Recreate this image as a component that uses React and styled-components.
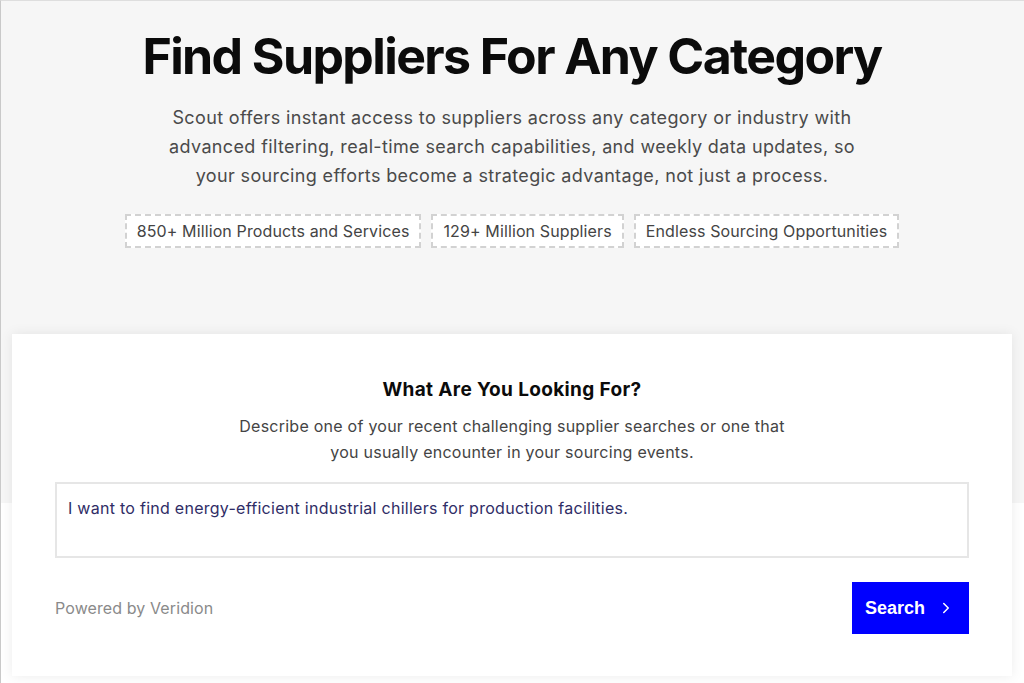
import React, { useState } from 'react'
import styled, { createGlobalStyle } from 'styled-components'
import { ChevronRight } from 'lucide-react'

const GlobalStyle = createGlobalStyle`
  html, body {
    margin: 0;
    padding: 0;
    background: #fff;
  }
  body {
    font-family: Inter, "Noto Sans", sans-serif;
    color: #111;
  }
  * { box-sizing: border-box; }
`

const Page = styled.div`
  min-height: 683px;
  border-left: 1px solid #c9c9c9;
  border-top: 1px solid #dedede;
  background: linear-gradient(#f6f6f6 0, #f6f6f6 502px, #fff 502px);
  padding: 0 12px 8px 11px;
`

const Hero = styled.section`
  display: flex;
  flex-direction: column;
  align-items: center;
  padding-top: 24px;
  padding-bottom: 86px;
`

const Title = styled.h1`
  margin: 0;
  font-size: 50px;
  line-height: 62px;
  font-weight: 700;
  letter-spacing: -1.6px;
  color: #0b0b0b;
`

const Lead = styled.p`
  margin: 16px 0 0;
  text-align: center;
  font-size: 18px;
  line-height: 29px;
  color: #4a4a4a;
  letter-spacing: 0.36px;
  white-space: nowrap;
`

const Tags = styled.div`
  display: flex;
  gap: 10px;
  margin-top: 24px;
`

const Tag = styled.span`
  display: inline-block;
  background: #fff;
  border: 2px dashed #d2d2d2;
  padding: 5px 10px;
  font-size: 16px;
  line-height: 20px;
  color: #444;
  letter-spacing: 0.12px;
`

const Card = styled.div`
  background: #fff;
  box-shadow: 0 0 12px rgba(0, 0, 0, 0.08);
  padding: 43px 43px 42px;
  display: flex;
  flex-direction: column;
  align-items: center;
`

const CardTitle = styled.h2`
  margin: 0;
  font-size: 19px;
  line-height: 26px;
  font-weight: 700;
  letter-spacing: 0.35px;
  color: #0b0b0b;
`

const CardText = styled.p`
  margin: 10px 0 0;
  text-align: center;
  font-size: 16px;
  line-height: 26px;
  color: #444;
  letter-spacing: 0.25px;
  white-space: nowrap;
`

const Field = styled.textarea`
  margin-top: 17px;
  width: 100%;
  height: 76px;
  resize: none;
  border: 2px solid #e6e6e6;
  outline: none;
  padding: 13px 11px;
  font-family: Inter, "Noto Sans", sans-serif;
  font-size: 16px;
  line-height: 22px;
  color: #2f2d66;
  letter-spacing: 0.27px;
`

const Footer = styled.div`
  width: 100%;
  margin-top: 24px;
  display: flex;
  align-items: center;
  justify-content: space-between;
`

const Powered = styled.span`
  font-size: 16px;
  color: #8a8a8a;
  letter-spacing: 0.1px;
`

const SearchButton = styled.button`
  display: flex;
  align-items: center;
  gap: 12px;
  height: 52px;
  padding: 0 14px 0 13px;
  background: #0000ff;
  border: none;
  color: #fff;
  font-family: "Liberation Sans", Arial, sans-serif;
  font-size: 18px;
  font-weight: 700;
  cursor: pointer;
`

export default function App() {
  const [query, setQuery] = useState(
    'I want to find energy-efficient industrial chillers for production facilities.'
  )

  return (
    <Page>
      <GlobalStyle />
      <Hero>
        <Title>Find Suppliers For Any Category</Title>
        <Lead>
          Scout offers instant access to suppliers across any category or industry with
          <br />
          advanced filtering, real-time search capabilities, and weekly data updates, so
          <br />
          your sourcing efforts become a strategic advantage, not just a process.
        </Lead>
        <Tags>
          <Tag>850+ Million Products and Services</Tag>
          <Tag>129+ Million Suppliers</Tag>
          <Tag>Endless Sourcing Opportunities</Tag>
        </Tags>
      </Hero>
      <Card>
        <CardTitle>What Are You Looking For?</CardTitle>
        <CardText>
          Describe one of your recent challenging supplier searches or one that
          <br />
          you usually encounter in your sourcing events.
        </CardText>
        <Field value={query} onChange={e => setQuery(e.target.value)} />
        <Footer>
          <Powered>Powered by Veridion</Powered>
          <SearchButton>
            Search
            <ChevronRight size={18} strokeWidth={2} />
          </SearchButton>
        </Footer>
      </Card>
    </Page>
  )
}
